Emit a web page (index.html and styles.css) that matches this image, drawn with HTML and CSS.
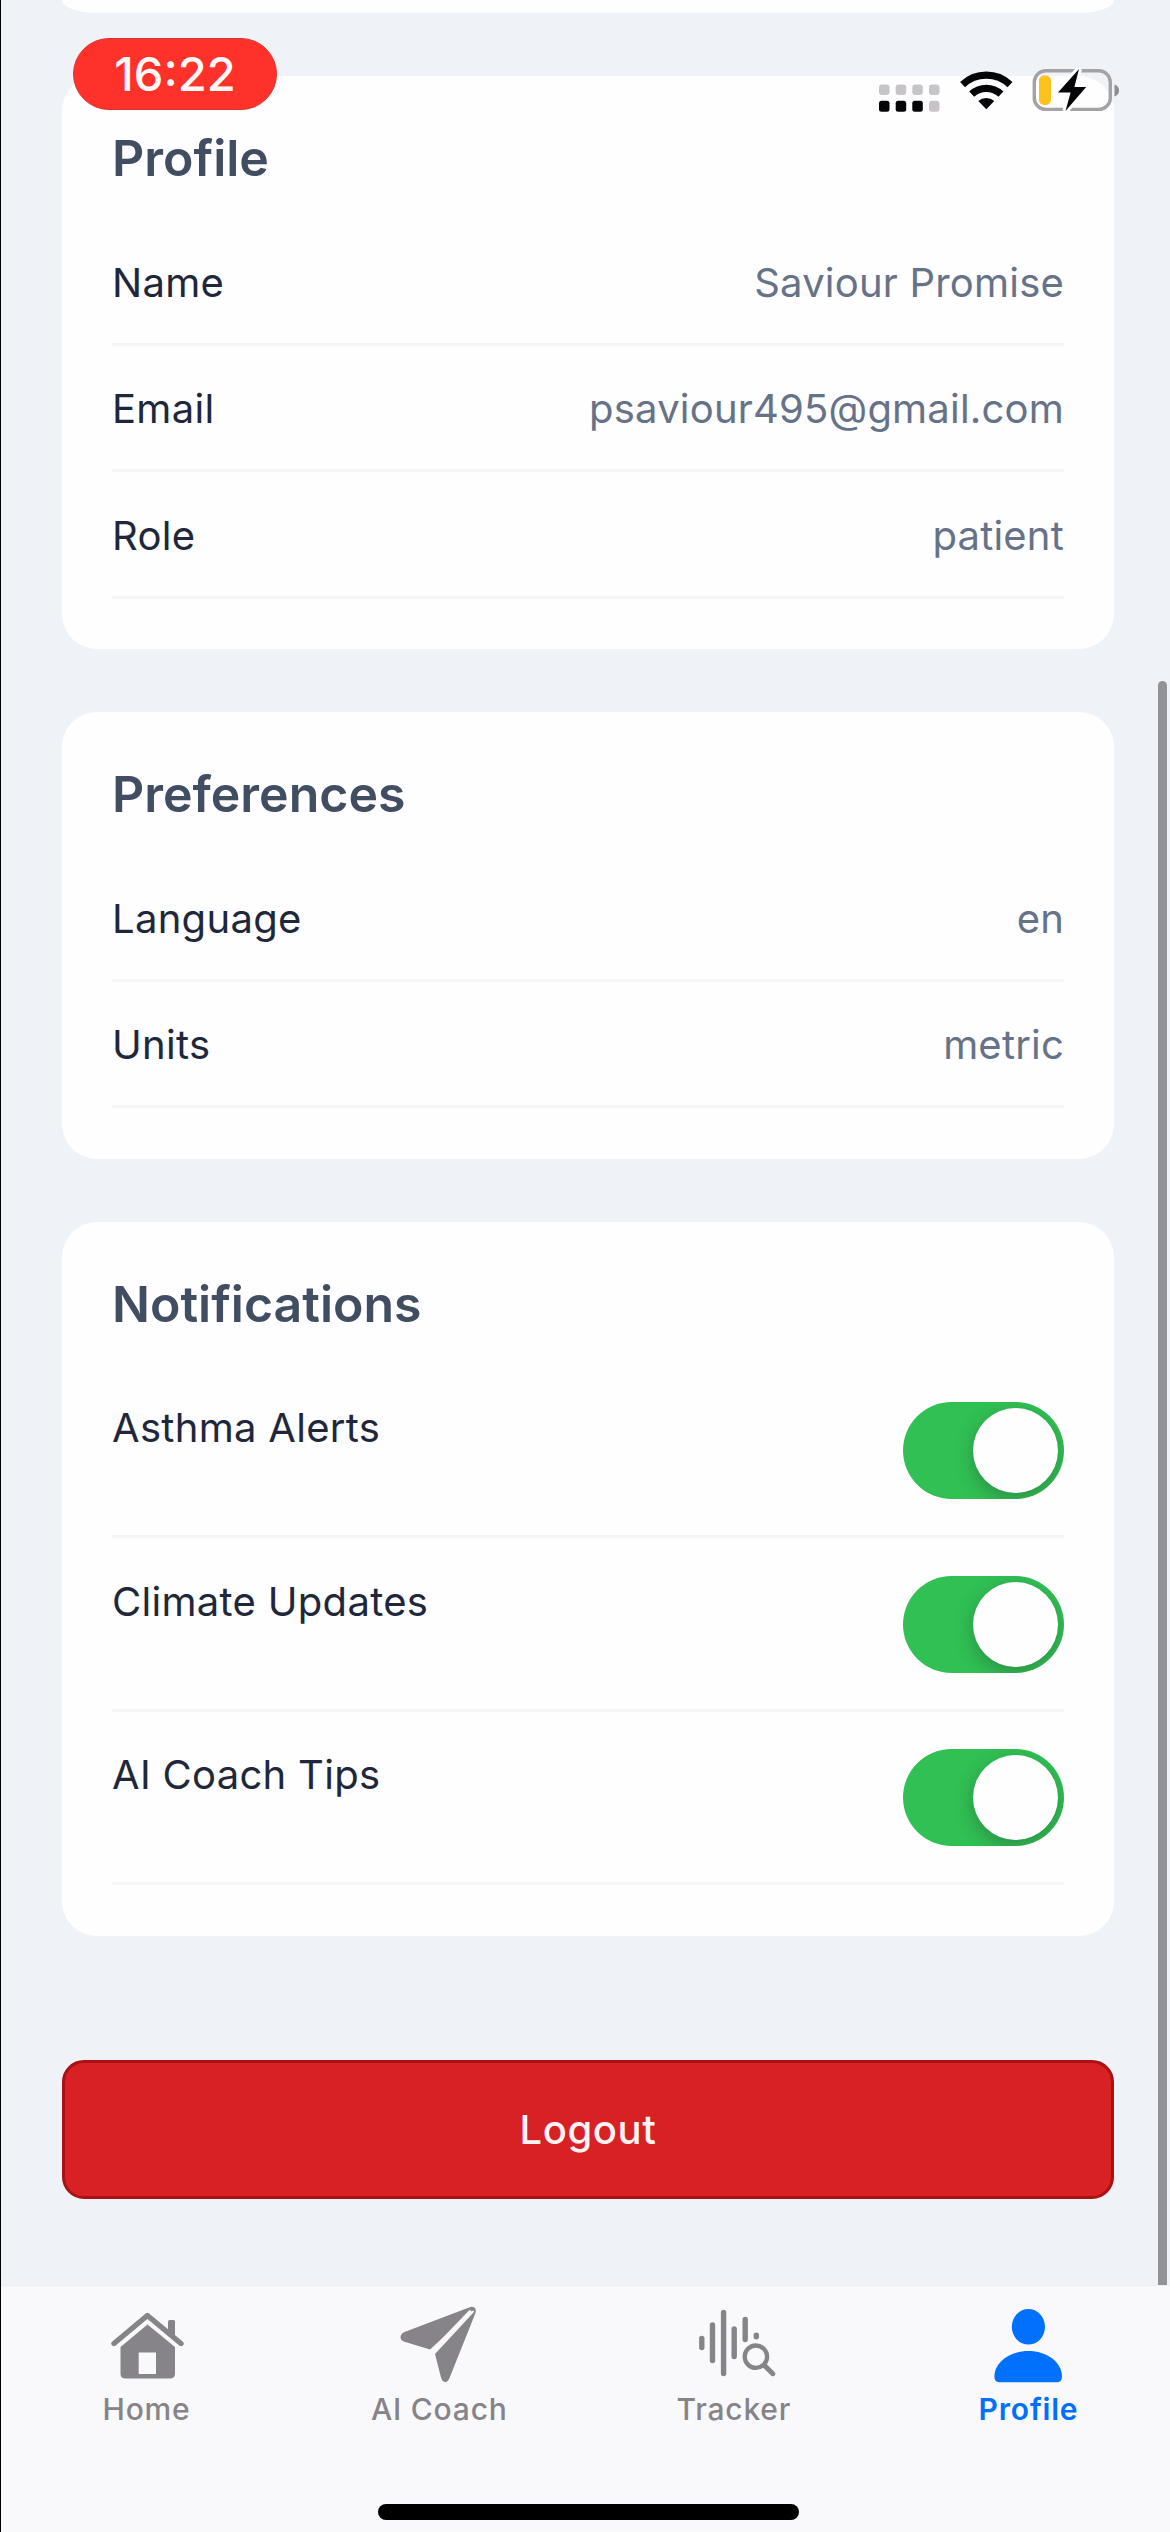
FILE: index.html
```html
<!DOCTYPE html>
<html lang="en">
<head>
<meta charset="utf-8">
<title>Profile</title>
<link rel="stylesheet" href="styles.css">
</head>
<body>
<div class="screen">
  <header class="status">
    <div class="time">16:22</div>
    <svg class="status-icons" width="244" height="48" viewBox="876 66 244 48">
      <g fill="#c6c4c8">
        <rect x="878" y="84.5" width="10.5" height="10.5" rx="3"/><rect x="894.7" y="84.5" width="10.5" height="10.5" rx="3"/><rect x="911.3" y="84.5" width="10.5" height="10.5" rx="3"/><rect x="928" y="84.5" width="10.5" height="10.5" rx="3"/><rect x="928" y="100.7" width="10.5" height="11" rx="3"/>
      </g>
      <g fill="#050507">
        <rect x="878" y="100.7" width="10.5" height="11" rx="2.5"/><rect x="894.7" y="100.7" width="10.5" height="11" rx="2.5"/><rect x="911.3" y="100.7" width="10.5" height="11" rx="2.5"/>
        <path d="M985.3 109.3l-8-8.2a12 12 0 0 1 16 0z"/>
      </g>
      <g fill="none" stroke="#050507" stroke-width="7.2">
        <path d="M961.6 84.6a34.5 34.5 0 0 1 47.4 0"/>
        <path d="M970.7 94.2a21.4 21.4 0 0 1 29.2 0"/>
      </g>
      <rect x="1033.3" y="70.8" width="76" height="38.6" rx="11.5" fill="none" stroke="#a3a2a6" stroke-width="3.4"/>
      <path d="M1113.5 84.5q4.5 1.5 4.5 6t-4.5 6z" fill="#8d8c90"/>
      <rect x="1038" y="75.5" width="12" height="29.5" rx="5" fill="#fdc21c"/>
      <path d="M1078 69l-21 23.5h12.6L1064.5 111l20.7-24h-11.8z" fill="#050507" stroke="#fefdff" stroke-width="6" paint-order="stroke"/>
    </svg>
  </header>

  <main class="content">
    <section class="card card-previous"></section>
    <section class="card">
      <h2>Profile</h2>
      <div class="row"><span>Name</span><span class="value">Saviour Promise</span></div>
      <div class="row"><span>Email</span><span class="value">psaviour495@gmail.com</span></div>
      <div class="row"><span>Role</span><span class="value">patient</span></div>
    </section>
    <section class="card">
      <h2>Preferences</h2>
      <div class="row"><span>Language</span><span class="value">en</span></div>
      <div class="row"><span>Units</span><span class="value">metric</span></div>
    </section>
    <section class="card">
      <h2>Notifications</h2>
      <div class="row row-toggle"><span>Asthma Alerts</span><i class="toggle"></i></div>
      <div class="row row-toggle"><span>Climate Updates</span><i class="toggle"></i></div>
      <div class="row row-toggle"><span>AI Coach Tips</span><i class="toggle"></i></div>
    </section>
    <button class="logout"><span>Logout</span></button>
    <div class="scrollbar"></div>
  </main>

  <nav class="tabs">
    <a class="tab">
      <svg width="84" height="84" viewBox="104 2302 84 84">
        <path d="M113 2343.5L146.4 2315.5 180 2343.5" fill="none" stroke="currentColor" stroke-width="5.4" stroke-linecap="round" stroke-linejoin="round"/>
        <path d="M167 2331v-9.5q0-1.5 1.5-1.5h4q1.5 0 1.5 1.5V2337z" fill="currentColor"/>
        <path fill-rule="evenodd" d="M146.5 2324.5L174 2347v26.5q0 5-5 5h-44.5q-5 0-5-5V2347zM137.7 2352.5v21.5h17.3v-21.5z" fill="currentColor"/>
      </svg>
      <span>Home</span>
    </a>
    <a class="tab">
      <svg width="84" height="84" viewBox="398 2302 84 84" fill="currentColor">
        <path d="M470 2307.5L405.5 2332q-4 2-4 5.2 0 3.2 4 4.6L431 2349.5 473 2311q3-1.5 1.5 1.5L436 2354l6 23.5q1.5 4.5 4.3 4.5 2.7 0 4.2-4L476.5 2313q1-4-1.5-5.7-2-1-5 .2z"/>
        <path d="M472 2311L432.5 2352" stroke="#f9f9fc" stroke-width="3.5"/>
      </svg>
      <span>AI Coach</span>
    </a>
    <a class="tab">
      <svg width="84" height="84" viewBox="692 2302 84 84" fill="none" stroke="currentColor" stroke-width="5.4" stroke-linecap="round">
        <path d="M701.8 2338.5v9M712.5 2325v35.5M723.6 2312.5v61M734.2 2329v27.5M745.2 2319.5v20M756.3 2335.3v1.5"/>
        <circle cx="755.9" cy="2356.7" r="15.5" stroke="none" fill="#f9f9fc"/>
        <circle cx="755.9" cy="2356.7" r="11.2" stroke-width="4.3"/>
        <path d="M764.5 2365.5l8.3 8.2" stroke-width="5"/>
      </svg>
      <span>Tracker</span>
    </a>
    <a class="tab tab-active">
      <svg width="84" height="84" viewBox="987 2302 84 84" fill="currentColor">
        <ellipse cx="1029.4" cy="2326.8" rx="16.6" ry="17.8"/>
        <path d="M1001 2382.3q-5.6 0-5.6-5.5c0-15 16-25.8 34-25.8s33.6 10.8 33.6 25.8q0 5.5-5.6 5.5z"/>
      </svg>
      <span>Profile</span>
    </a>
    <div class="home-indicator"></div>
  </nav>
</div>
</body>
</html>
```
FILE: styles.css
```css
* {
  box-sizing: border-box;
}

body {
  margin: 0;
  font-family: Inter, "Liberation Sans", sans-serif;
}

.screen {
  position: relative;
  display: flex;
  flex-direction: column;
  width: 1170px;
  height: 2532px;
  overflow: hidden;
  background: #eff3f8;
  border-left: 1px solid #000;
}

.status {
  position: absolute;
  z-index: 2;
  inset: 38px 49px auto 72px;
  display: flex;
  justify-content: space-between;
}

.time {
  width: 204px;
  height: 72px;
  border: 1.5px solid #d83330;
  border-radius: 36px;
  background: #ff322b;
  color: #fff8f6;
  font-size: 47px;
  font-weight: 450;
  line-height: 69px;
  text-align: center;
}

.status-icons {
  margin-top: 28px;
}

.content {
  position: relative;
  flex: none;
  display: flex;
  flex-direction: column;
  gap: 63px;
  height: 2285px;
  padding: 0 56px 0 61px;
}

.card {
  flex: none;
  padding: 50px 50px 50.5px;
  border-radius: 35px;
  background: #fefdff;
}

.card-previous {
  height: 13px;
  padding: 0;
  border-radius: 0 0 35px 35px / 0 0 13px 13px;
}

h2 {
  margin: 0 0 29px;
  color: #414e62;
  font-size: 50px;
  font-weight: 600;
  line-height: 64px;
}

.row {
  display: flex;
  justify-content: space-between;
  height: 126.5px;
  padding: 37.5px 0 0;
  border-bottom: 3px solid #f5f5f9;
  color: #20273a;
  font-size: 40px;
  line-height: 51px;
  letter-spacing: 0.3px;
}

.value {
  color: #667287;
  letter-spacing: 0.2px;
}

.row-toggle {
  height: 173.6px;
}

.toggle {
  display: flex;
  justify-content: flex-end;
  width: 161px;
  height: 97px;
  padding: 6px;
  border-radius: 49px;
  background: #30c053;
  overflow: hidden;
}

.toggle::after {
  content: "";
  width: 85px;
  height: 85px;
  border-radius: 50%;
  background: #fefeff;
  box-shadow: 0 6px 18px rgba(40, 70, 50, 0.4);
}

.logout {
  flex: none;
  height: 139px;
  margin-top: 61px;
  border: 3px solid #ab1015;
  border-radius: 22px;
  background: #d82125;
  color: #fff3f3;
  font: 550 40px Inter, "Liberation Sans", sans-serif;
  letter-spacing: 0.6px;
}

.scrollbar {
  position: absolute;
  top: 681px;
  right: 3px;
  bottom: 0;
  width: 9px;
  border-radius: 5px 5px 0 0;
  background: #929397;
}

.tabs {
  position: relative;
  flex: 1;
  display: grid;
  grid-template-columns: 291px repeat(3, 294.6px);
  padding-top: 16px;
  border-top: 1px solid #ececf2;
  background: #f9f9fc;
}

.tab {
  display: flex;
  flex-direction: column;
  align-items: center;
  color: #868489;
  font-size: 30px;
  font-weight: 500;
  line-height: 36px;
  letter-spacing: 0.8px;
}

.tab svg {
  display: block;
  margin-bottom: 5px;
}

.tab-active {
  color: #0070fd;
  font-weight: 600;
}

.home-indicator {
  position: absolute;
  left: 377px;
  bottom: 12px;
  width: 421px;
  height: 16px;
  border-radius: 8px;
  background: #000;
}
```
